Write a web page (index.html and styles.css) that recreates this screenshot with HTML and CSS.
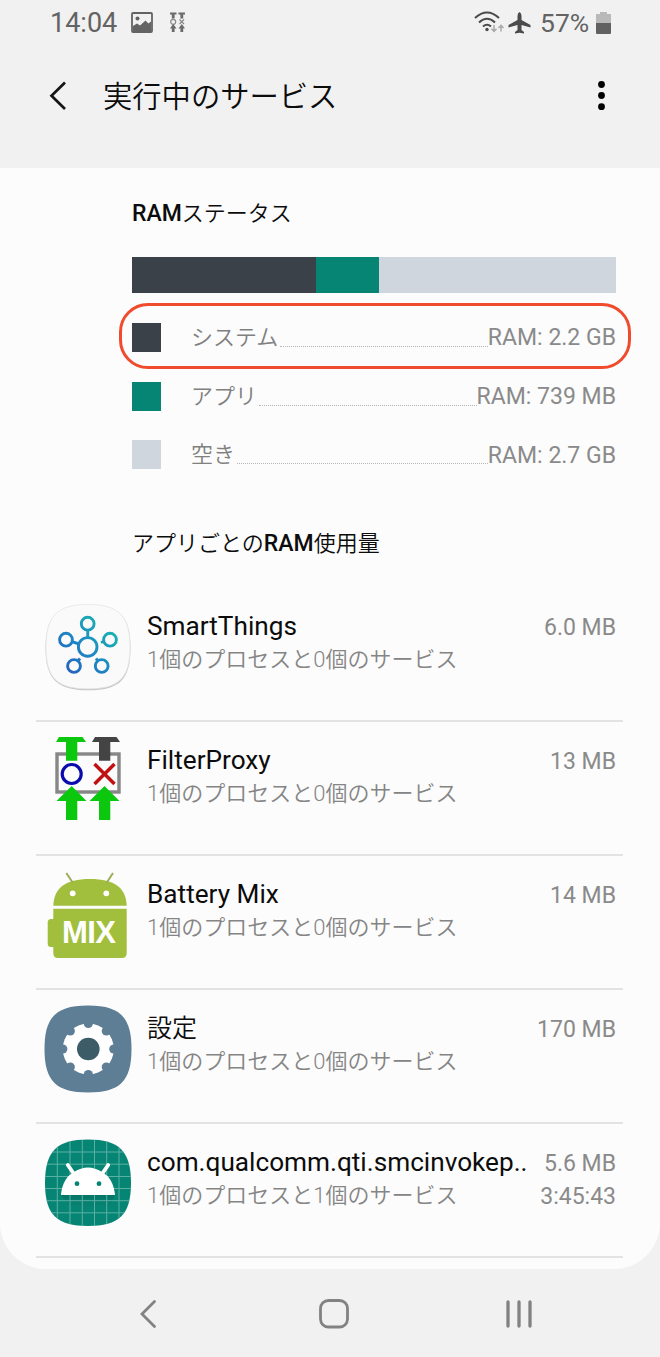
FILE: index.html
```html
<!DOCTYPE html>
<html lang="ja">
<head>
<meta charset="utf-8">
<title>実行中のサービス</title>
<link rel="stylesheet" href="styles.css">
</head>
<body>
<div class="status">
  <span class="clock">14:04</span>
  <svg class="s-image" width="22" height="21" viewBox="0 0 22 21"><rect x="1" y="1" width="20" height="19" rx="1" fill="none" stroke="#636363" stroke-width="1.8"/><circle cx="6.5" cy="6.5" r="2" fill="#636363"/><path d="M2 19V14L6 11.500L9 13.500L14.500 8.500L17.500 11.500L20 9.500V19Z" fill="#636363"/></svg>
  <svg class="s-filter" width="15" height="21" viewBox="0 0 15 21" fill="none" stroke="#6b6b6b"><path d="M0 1.500H6.500M8.500 1.500H15" stroke-width="1.800"/><path d="M3.200 1V6.500M11.800 1V6.500M3.200 14V20M11.800 14V20" stroke-width="2.800"/><circle cx="3.200" cy="9.800" r="2.500" stroke-width="1.200" stroke="#888"/><path d="M9.500 7.500L14 12M14 7.500L9.500 12" stroke-width="1.200" stroke="#888"/><path d="M3.200 12L6.500 16.500H0ZM11.800 12L15 16.500H8.500Z" fill="#6b6b6b" stroke="none"/></svg>
  <span class="space"></span>
  <svg class="s-wifi" width="30" height="23" viewBox="0 0 30 23" fill="none" stroke="#4b4b4b" stroke-width="2.1"><path d="M1 7Q13-4 25 7M5 11.5Q13 4 21 11.5M9 15.5Q13 12 17 15.5"/><circle cx="13" cy="18.5" r="1.7" fill="#4b4b4b" stroke="none"/><path d="M20 14V20M17.5 17.8L20 20.5L22.500 17.800M27 20.500V15M24.500 17L27 14.300L29.500 17" stroke="#aaa" stroke-width="1.500"/></svg>
  <svg class="s-plane" width="23" height="22" viewBox="0 0 23 22"><path d="M11.500 0Q13.500 1 13.500 4V8L22.500 13V15.500L13.500 13V18L16 20V21.500L11.500 20.700L7 21.500V20L9.500 18V13L.5 15.500V13L9.500 8V4Q9.500 1 11.500 0Z" fill="#4b4b4b"/></svg>
  <span class="percent">57%</span>
  <svg class="s-batt" width="15" height="22" viewBox="0 0 15 22"><path d="M4 0H11V2H15V11H0V2H4Z" fill="#b9b9b9"/><path d="M0 11H15V21Q15 22 14 22H1Q0 22 0 21Z" fill="#616161"/></svg>
</div>
<header class="bar">
  <svg class="back" width="18" height="30" viewBox="0 0 18 30"><path d="M16 1.500L2.500 14.700L16 28" fill="none" stroke="#151515" stroke-width="2.700"/></svg>
  <h1 class="title">実行中のサービス</h1>
  <svg class="more" width="8" height="30" viewBox="0 0 8 30"><circle cx="4.500" cy="3.500" r="3.400"/><circle cx="4.500" cy="14.500" r="3.400"/><circle cx="4.500" cy="25.700" r="3.400"/></svg>
</header>
<main class="card">
  <section class="ram">
    <h2 class="heading"><b>RAM</b>ステータス</h2>
    <div class="meter"><i class="system"></i><i class="apps"></i><i class="free"></i></div>
    <div class="legend">
      <div class="item marked"><i class="swatch system"></i><span class="label">システム</span><i class="dots"></i><span class="val">RAM: 2.2 GB</span></div>
      <div class="item"><i class="swatch apps"></i><span class="label">アプリ</span><i class="dots"></i><span class="val">RAM: 739 MB</span></div>
      <div class="item"><i class="swatch free"></i><span class="label">空き</span><i class="dots"></i><span class="val">RAM: 2.7 GB</span></div>
    </div>
    <h2 class="heading second">アプリごとの<b>RAM</b>使用量</h2>
  </section>
  <section class="list">
    <div class="row">
      <svg class="icon" viewBox="0 0 86 86"><defs><linearGradient id="st" gradientUnits="userSpaceOnUse" x1="22" y1="65" x2="62" y2="25"><stop offset="0" stop-color="#2465bd"/><stop offset=".5" stop-color="#1d88c4"/><stop offset="1" stop-color="#18aeb4"/></linearGradient></defs><path d="M43 1C74 1 85.500 12 85.500 44S74 86.300 43 86.300S.5 75 .5 44S12 1 43 1Z" fill="#c9c7c5"/><path d="M43 .5C74 .5 85 12 85 43S74 84.800 43 84.800S1 74 1 43S12 .5 43 .5Z" fill="#fafafa" stroke="#e6e6e6" stroke-width=".8"/><g fill="none" stroke="url(#st)" stroke-width="2.900"><circle cx="42.700" cy="42.900" r="9.300"/><circle cx="42.700" cy="19.700" r="6.400"/><circle cx="21" cy="35.700" r="6.400"/><circle cx="65" cy="35.700" r="6.400"/><circle cx="29" cy="62" r="6.400"/><circle cx="56.700" cy="62" r="6.400"/><path d="M42.800 26L42.700 33.500M27 37.700L34 40M58.500 37.500L56 38.500M33 57L35 54.500M53 57L51 54.500"/></g></svg>
      <div class="text"><div class="name">SmartThings</div><div class="sub">1個のプロセスと0個のサービス</div></div>
      <div class="size">6.0 MB</div>
    </div>
    <div class="row">
      <svg class="icon" viewBox="0 0 86 86"><rect x="12" y="16" width="62" height="38" fill="#fcfcfc" stroke="#878787" stroke-width="3.400"/><path d="M14-1H37.500L41 4H32.300V22.700H21V4H11Z" fill="#0bc80f"/><path d="M50-1H71.500L75 4H65.300V22.700H54V4H47Z" fill="#444"/><circle cx="26.700" cy="36" r="9.500" fill="none" stroke="#0c0cae" stroke-width="3.200"/><path d="M49.500 26L69.500 46M69.500 26L49.500 46" stroke="#c11012" stroke-width="3.500"/><path d="M26.700 48L41.500 63H32.300V82H21V63H11.500ZM59.500 48L74.500 63H65.300V82H54V63H44.500Z" fill="#0bc80f"/></svg>
      <div class="text"><div class="name">FilterProxy</div><div class="sub">1個のプロセスと0個のサービス</div></div>
      <div class="size">13 MB</div>
    </div>
    <div class="row">
      <svg class="icon" viewBox="0 0 86 86"><g fill="#a1bf3d"><path d="M8.300 33.700C9 16 20 7 45 7S81 16 81.700 33.700Z"/><path d="M8.300 36.700H81.700V81Q81.700 86 77 86H13Q8.300 86 8.300 81V75H6Q2.700 75 2.700 71.500V50.500Q2.700 47 6 47H8.300Z"/></g><path d="M21.300 1L28 11M68 1L61.500 11" stroke="#9aad57" stroke-width="2"/><circle cx="27.700" cy="21.300" r="2.900" fill="#fff"/><circle cx="61.300" cy="21.300" r="2.900" fill="#fff"/><text class="mix" x="17" y="70.500" textLength="54" lengthAdjust="spacing">MIX</text></svg>
      <div class="text"><div class="name">Battery Mix</div><div class="sub">1個のプロセスと0個のサービス</div></div>
      <div class="size">14 MB</div>
    </div>
    <div class="row">
      <svg class="icon" viewBox="0 0 86 86"><path d="M43-.5C75-.5 86.500 11 86.500 43S75 86.500 43 86.500S-.5 75-.5 43S11-.5 43-.5Z" fill="#5e7e96"/><circle cx="43.300" cy="43" r="25.500" fill="#fff"/><g fill="#5e7e96"><circle cx="43.300" cy="17.500" r="4.600"/><circle cx="61.300" cy="25" r="4.600"/><circle cx="68.800" cy="43" r="4.600"/><circle cx="61.300" cy="61" r="4.600"/><circle cx="43.300" cy="68.500" r="4.600"/><circle cx="25.300" cy="61" r="4.600"/><circle cx="17.800" cy="43" r="4.600"/><circle cx="25.300" cy="25" r="4.600"/></g><circle cx="43.300" cy="43" r="11.300" fill="#3c5c67"/></svg>
      <div class="text"><div class="name kanji">設定</div><div class="sub">1個のプロセスと0個のサービス</div></div>
      <div class="size">170 MB</div>
    </div>
    <div class="row">
      <svg class="icon" viewBox="0 0 86 86"><defs><clipPath id="sq"><path d="M43-.5C74-.5 86 11 86 43S74 86 43 86S0 75 0 43S12-.5 43-.5Z"/></clipPath><linearGradient id="shade" x1="0" y1="0" x2="0" y2="1"><stop offset="0" stop-color="#04685b"/><stop offset="1" stop-color="#078574" stop-opacity="0"/></linearGradient></defs><g clip-path="url(#sq)"><path d="M-1-1H87V87H-1Z" fill="#078574"/><path d="M16 55H70L63 72H30Z" fill="url(#shade)" opacity=".6"/><path d="M12.300 0V86M25 0V86M37.300 0V86M49.500 0V86M61.700 0V86M74 0V86M0 12H86M0 24.200H86M0 36.500H86M0 48.500H86M0 60.700H86M0 72.800H86" stroke="#5bb0a4" stroke-width="1"/></g><path d="M16 55C17 43 22 36 29 32Q36 27.500 43 27.500T57 32C64 36 69 43 70 55Z" fill="#fff"/><path d="M22.800 25L29 34M63.200 25L57 34" stroke="#fff" stroke-width="3.800" stroke-linecap="round"/><circle cx="32" cy="43.700" r="2.400" fill="#078574"/><circle cx="54" cy="43.700" r="2.400" fill="#078574"/></svg>
      <div class="text"><div class="name">com.qualcomm.qti.smcinvokep..</div><div class="sub">1個のプロセスと1個のサービス</div></div>
      <div class="size">5.6 MB<br>3:45:43</div>
    </div>
  </section>
</main>
<nav class="nav">
  <svg width="18" height="30" viewBox="0 0 18 30"><path d="M15.500 2.500L3 15L15.500 27.500" fill="none" stroke="#828282" stroke-width="2.800" stroke-linecap="round"/></svg>
  <svg class="home" width="30" height="30" viewBox="0 0 30 30"><rect x="1.500" y="1.500" width="27" height="26.500" rx="8" fill="none" stroke="#828282" stroke-width="2.800"/></svg>
  <svg width="28" height="30" viewBox="0 0 28 30"><path d="M3 3V27M14 3V27M25 3V27" stroke="#828282" stroke-width="3.300" stroke-linecap="round"/></svg>
</nav>
</body>
</html>
```
FILE: styles.css
```css
* { box-sizing: border-box; }
body {
  margin: 0;
  width: 660px;
  height: 1357px;
  background: #f1f1f1;
  font-family: Roboto, "Noto Sans CJK JP", sans-serif;
  font-weight: 350;
  color: #0c0c0c;
  display: flex;
  flex-direction: column;
  overflow: hidden;
}
svg { display: block; flex: none; overflow: visible; }
i { display: block; }

.status {
  height: 46px;
  flex: none;
  display: flex;
  align-items: center;
  padding: 0 49px 1px 50px;
  color: #636363;
  font-size: 27px;
  font-weight: 400;
}
.clock { width: 81px; }
.s-filter { margin-left: 17px; }
.space { flex: 1; }
.s-wifi { margin-right: 4px; }
.percent { margin: 0 6px 0 9px; width: 50px; white-space: nowrap; font-size: 26.500px; }

.bar {
  height: 122px;
  flex: none;
  display: flex;
  align-items: flex-start;
  padding: 35px 55px 0 49px;
}
.title {
  margin: -4px 0 0 36px;
  flex: 1;
  font-size: 29.300px;
  line-height: 40px;
  font-weight: 350;
}

.card {
  flex: none;
  height: 1101px;
  background: #fcfcfc;
  border-radius: 0 0 46px 46px;
}
.ram { height: 420px; padding: 31px 44px 0 132px; }
.heading {
  margin: 0;
  font-size: 22px;
  line-height: 30px;
  height: 30px;
  font-weight: 350;
}
.heading b { font-weight: 500; font-size: 23px; }
.meter { display: flex; height: 36px; margin-top: 28px; }
.meter .system { width: 184px; }
.meter .apps { width: 63px; }
.meter .free { flex: 1; }
.system { background: #3a4148; }
.apps { background: #078574; }
.free { background: #d0d6de; }
.legend { margin-top: 10px; }
.item {
  height: 58.500px;
  display: flex;
  align-items: center;
  padding-top: 4px;
  font-size: 22px;
  color: #808080;
  line-height: 30px;
}
.item.marked {
  height: 66px;
  margin: 0 -15px -4px -13px;
  padding: 2px 12px 0 10px;
  border: 3px solid #ef4b2c;
  border-radius: 29px;
}
.label { padding-top: 1px; }
.swatch { width: 29px; height: 29px; margin-right: 30px; }
.dots { flex: 1; margin: 18px 0 0 2px; border-top: 1px dotted #b5b5b5; }
.val { font-size: 23px; font-weight: 400; color: #8a8a8a; padding-top: 2px; }
.second { margin-top: 47px; }

.row {
  height: 134px;
  margin: 0 37px 0 36px;
  padding: 16px 7px 0 9px;
  border-bottom: 2px solid #e3e3e3;
  display: flex;
}
.icon { width: 86px; height: 86px; }
.text { flex: 1; margin-left: 16px; white-space: nowrap; }
.name { font-size: 26.200px; line-height: 34px; height: 34px; margin-top: 5px; font-weight: 400; }
.name.kanji { font-size: 25px; font-weight: 350; padding-top: 1px; }
.sub { font-size: 22px; line-height: 32px; color: #858585; padding-top: 1px; }
.size {
  margin-top: 7px;
  font-size: 23px;
  font-weight: 400;
  line-height: 33px;
  color: #8a8a8a;
  text-align: right;
}
.mix { font-family: "Liberation Sans", sans-serif; font-weight: bold; font-size: 31px; fill: #fff; }

.nav {
  flex: 1;
  display: flex;
  justify-content: space-between;
  align-items: flex-start;
  padding: 30px 127px 0 139px;
}
.home { margin-left: 5px; }
```
